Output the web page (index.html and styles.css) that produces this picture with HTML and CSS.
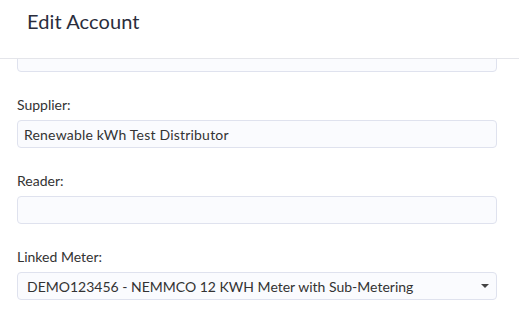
FILE: index.html
```html
<!doctype html>
<html lang="en">
  <head>
    <title>Edit Account</title>
    <link rel="stylesheet" href="styles.css">
  </head>
  <body>
    <div class="modal">
      <div class="modal-header">
        <h1>Edit Account</h1>
      </div>
      <div class="modal-body">
        <form class="account-form">
          <div class="field field-cut">
            <input type="text" class="form-input" value="">
          </div>
          <div class="field">
            <label>Supplier:</label>
            <input type="text" class="form-input input-wide" value="Renewable kWh Test Distributor">
          </div>
          <div class="field">
            <label>Reader:</label>
            <input type="text" class="form-input" value="">
          </div>
          <div class="field">
            <label>Linked Meter:</label>
            <div class="select-wrap">
              <select class="form-input form-select">
                <option>DEMO123456 - NEMMCO 12 KWH Meter with Sub-Metering</option>
              </select>
              <span class="caret"></span>
            </div>
          </div>
        </form>
      </div>
    </div>
  </body>
</html>
```
FILE: styles.css
```css
body {
  font-family: Lato, "Open Sans", sans-serif;
  background-color: #fff;
  color: #333;
  margin: 0;
  padding: 0;
}

.modal {
  width: 519px;
  height: 315px;
  overflow: hidden;
}

.modal-header {
  height: 59px;
  border-bottom: 1px solid #e4e5ea;
  box-sizing: border-box;
  padding: 7px 27px 0;
}

.modal-header h1 {
  margin: 0;
  font-size: 20px;
  font-weight: 400;
  color: #2a2d3c;
  line-height: 28px;
  letter-spacing: 0.1px;
}

.modal-body {
  padding: 0 22px 0 17px;
  overflow: hidden;
}

.field {
  margin-bottom: 22px;
}

.field-cut {
  margin-top: -15px;
  margin-bottom: 22px;
}

.field label {
  display: block;
  font-size: 14px;
  line-height: 21px;
  margin-bottom: 5px;
  color: #333;
}

.form-input {
  display: block;
  width: 100%;
  box-sizing: border-box;
  height: 28px;
  padding: 0 6px;
  font-family: inherit;
  font-size: 14px;
  color: #333;
  background: #fafbfe;
  border: 1px solid #dfe2ee;
  border-radius: 4px;
  outline: none;
}

.input-wide {
  letter-spacing: 0.2px;
}

.select-wrap {
  position: relative;
}

.form-select {
  appearance: none;
  -webkit-appearance: none;
  padding-left: 9px;
}

.caret {
  position: absolute;
  right: 8px;
  top: 12px;
  width: 0;
  height: 0;
  border-left: 4px solid transparent;
  border-right: 4px solid transparent;
  border-top: 4px solid #444;
}
```
